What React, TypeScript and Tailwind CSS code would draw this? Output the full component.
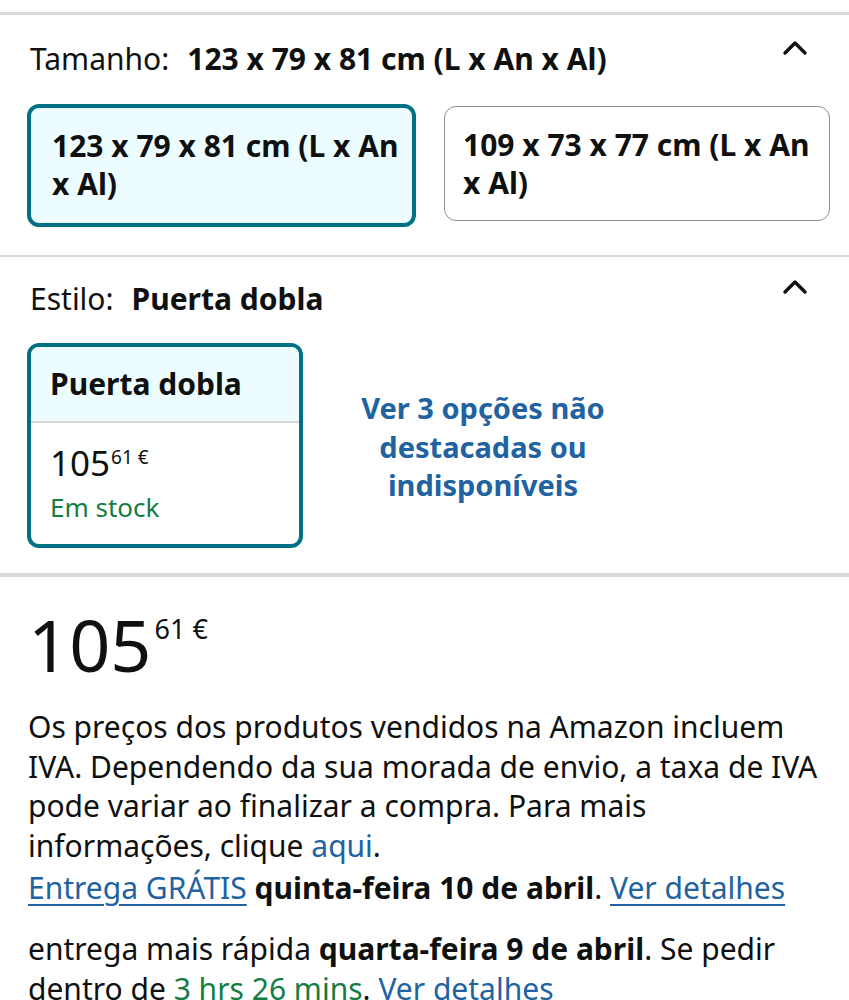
import React from "react";

function Chevron() {
  return (
    <svg width="26" height="16" viewBox="0 0 26 16" fill="none">
      <path d="M3 13 L13 3 L23 13" stroke="#0f1111" strokeWidth="3.4" strokeLinecap="round" strokeLinejoin="round" />
    </svg>
  );
}

export default function App() {
  return (
    <div className="w-[849px] bg-white text-[#0f1111] font-['Noto_Sans',sans-serif] overflow-hidden">
      <div className="h-[12px]" />
      <div className="border-t-[3px] border-[#d5d9d9]" />
      {/* Tamanho */}
      <div className="pl-[27px] pr-[19px] pt-[24px] pb-[28px]">
        <div className="flex items-start justify-between">
          <div className="text-[30px] leading-[40px] pl-[3px]">
            <span>Tamanho:</span>
            <span className="font-bold ml-[18px]">123 x 79 x 81 cm (L x An x Al)</span>
          </div>
          <div className="pt-[1px] pr-[22px]">
            <Chevron />
          </div>
        </div>
        <div className="flex gap-[28px] mt-[25px] items-start">
          <div className="shrink-0 w-[389px] h-[123px] rounded-[12px] border-[4px] border-[#007185] bg-[#edfdff] pl-[21px] pr-[10px] pt-[19px] text-[30px] leading-[38px] font-bold">
            123 x 79 x 81 cm (L x An x Al)
          </div>
          <div className="shrink-0 w-[386px] mt-[2px] h-[115px] rounded-[12px] border border-[#8d9096] bg-white pl-[18px] pr-[10px] pt-[19px] text-[30px] leading-[38px] font-bold">
            109 x 73 x 77 cm (L x An x Al)
          </div>
        </div>
      </div>
      <div className="border-t-[2px] border-[#d5d9d9]" />
      {/* Estilo */}
      <div className="pl-[27px] pr-[19px] pt-[21px] pb-[25px]">
        <div className="flex items-start justify-between">
          <div className="text-[30px] leading-[42px] pl-[3px]">
            <span>Estilo:</span>
            <span className="font-bold ml-[18px]">Puerta dobla</span>
          </div>
          <div className="pt-[1px] pr-[22px]">
            <Chevron />
          </div>
        </div>
        <div className="flex mt-[23px] items-start">
          <div className="shrink-0 w-[276px] h-[205px] rounded-[12px] border-[4px] border-[#007185] overflow-hidden flex flex-col">
            <div className="h-[76px] bg-[#edfdff] border-b-[2px] border-[#d5d9d9] pl-[19px] pt-[18px] text-[30px] leading-[38px] font-bold">
              Puerta dobla
            </div>
            <div className="pl-[19px] pt-[20px]">
              <div className="flex items-start">
                <span className="text-[35px] leading-[40px]">105</span>
                <span className="text-[19px] leading-[22px] mt-[3px] ml-[1px]">61 €</span>
              </div>
              <div className="text-[#137d44] text-[26px] leading-[36px] mt-[6px]">Em stock</div>
            </div>
          </div>
          <div className="w-[360px] text-center text-[#2162a1] font-bold text-[29px] leading-[38.5px] mt-[46px]">
            Ver 3 opções não destacadas ou indisponíveis
          </div>
        </div>
      </div>
      <div className="border-t-[4px] border-[#d5d9d9]" />
      {/* Price */}
      <div className="pl-[27px] pr-[10px] pt-[29px]">
        <div className="flex items-start pl-[1px]">
          <span className="text-[72px] leading-[76px]">105</span>
          <span className="text-[27px] leading-[32px] mt-[7px] ml-[3px]">61 €</span>
        </div>
        <p className="text-[30px] leading-[39.5px] mt-[25px] pl-[1px] w-[795px]">
          Os preços dos produtos vendidos na Amazon incluem IVA. Dependendo da sua morada de envio, a taxa de IVA pode variar ao finalizar a compra. Para mais informações, clique <span className="text-[#2162a1]">aqui</span>.
        </p>
        <p className="text-[30px] leading-[40px] mt-[3px] pl-[1px]">
          <span className="text-[#2162a1] underline underline-offset-[5px] decoration-[2px]">Entrega GRÁTIS</span> <span className="font-bold">quinta-feira 10 de abril</span>. <span className="text-[#2162a1] underline underline-offset-[5px] decoration-[2px]">Ver detalhes</span>
        </p>
        <p className="text-[30px] leading-[40px] mt-[21px] pl-[1px]">
          entrega mais rápida <span className="font-bold">quarta-feira 9 de abril</span>. Se pedir dentro de <span className="text-[#137d44]">3 hrs 26 mins</span>. <span className="text-[#2162a1]">Ver detalhes</span>
        </p>
      </div>
    </div>
  );
}
